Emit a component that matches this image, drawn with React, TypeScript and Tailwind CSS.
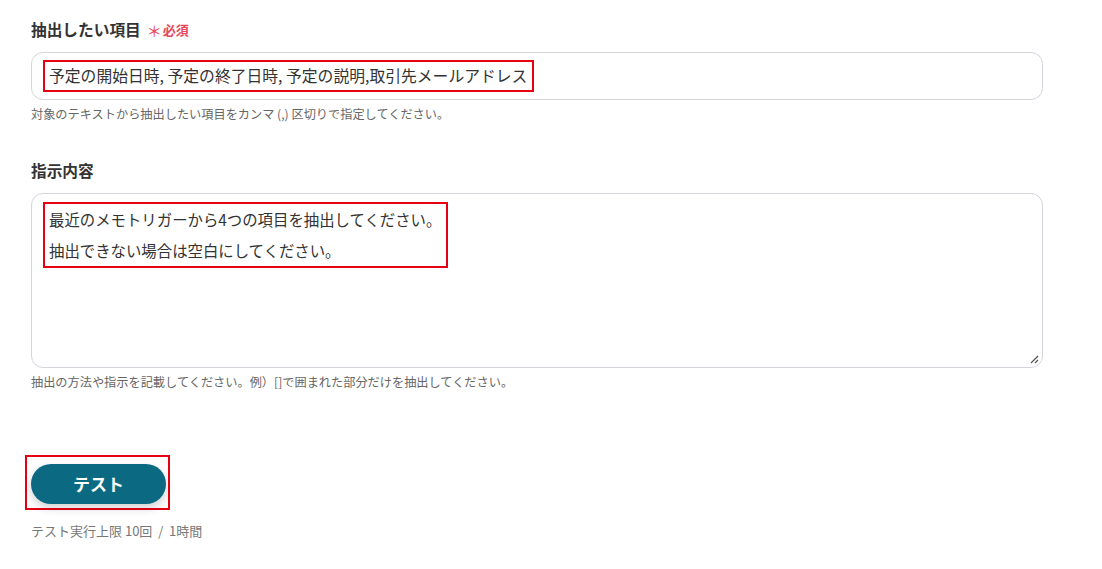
import React from "react";

export default function App() {
  const font = { fontFamily: '"Noto Sans CJK JP", "Noto Sans", sans-serif' };
  return (
    <div className="w-[1102px] h-[569px] bg-white text-[#333]" style={font}>
      <div className="pl-[31px] pr-[59px] pt-[18px]">
        <div className="flex items-center gap-[6px] h-[24px]">
          <span className="text-[15.7px] font-bold text-[#333]">抽出したい項目</span>
          <span className="text-[13px] font-bold text-[#e8475a] flex items-center">
            <span className="text-[15px] leading-none mr-[1px] font-normal">＊</span>必須
          </span>
        </div>
        <div className="mt-[10px] h-[48px] w-[1012px] border border-[#d4d5db] rounded-[12px] flex items-center pl-[11px]">
          <span className="border-2 border-[#e60012] h-[32px] flex items-center pl-[4px] pr-[5px] text-[15.8px] text-[#333] leading-none">
            予定の開始日時, 予定の終了日時, 予定の説明,取引先メールアドレス
          </span>
        </div>
        <div className="mt-[5px] text-[12.2px] text-[#666]">対象のテキストから抽出したい項目をカンマ (,) 区切りで指定してください。</div>

        <div className="mt-[35px] h-[24px] flex items-center text-[15.7px] font-bold text-[#333]">指示内容</div>
        <div className="mt-[11px] h-[175px] w-[1012px] border border-[#d4d5db] rounded-[12px] pl-[11px] pt-[8px] relative">
          <div className="inline-block border-2 border-[#e60012] pl-[4px] pr-[5px] text-[15.4px] leading-[31px] text-[#333]">
            <div>最近のメモトリガーから4つの項目を抽出してください。</div>
            <div>抽出できない場合は空白にしてください。</div>
          </div>
          <svg className="absolute right-[3px] bottom-[3px]" width="9" height="9" viewBox="0 0 9 9">
            <line x1="1" y1="8" x2="8" y2="1" stroke="#555" strokeWidth="1.2" />
            <line x1="5" y1="8" x2="8" y2="5" stroke="#555" strokeWidth="1.2" />
          </svg>
        </div>
        <div className="mt-[5px] text-[12.2px] text-[#666]">抽出の方法や指示を記載してください。例）[]で囲まれた部分だけを抽出してください。</div>

        <div className="mt-[63px] ml-[-6px] inline-block border-2 border-[#e60012] p-[7px_2px_4px_4px]">
          <button className="w-[135px] h-[40px] rounded-full bg-[#0b6a82] text-white text-[17px] font-bold shadow-[0_4px_10px_rgba(0,0,0,0.18)]">
            テスト
          </button>
        </div>
        <div className="mt-[11px] text-[13px] text-[#777] whitespace-pre">テスト実行上限 10回  /  1時間</div>
      </div>
    </div>
  );
}
